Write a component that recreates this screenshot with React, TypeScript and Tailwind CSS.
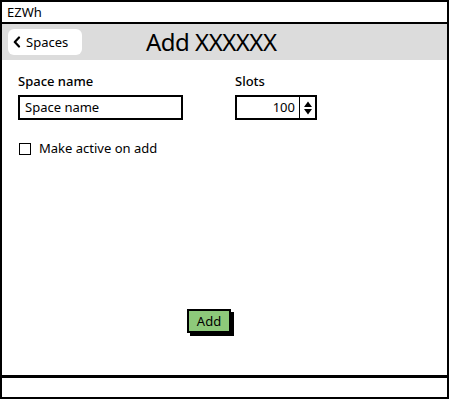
export default function App() {
  return (
    <div className="w-[450px] h-[400px] bg-white p-0 font-['Noto_Sans',sans-serif] text-black">
      <div className="flex h-[399px] w-[449px] flex-col border-2 border-black">
        {/* title bar */}
        <div className="flex h-[22px] items-center border-b-2 border-black px-[5px] text-[13px] leading-none">
          EZWh
        </div>

        {/* header */}
        <div className="flex h-[36px] items-center bg-[#dcdcdc] pl-[6px]">
          <button
            type="button"
            className="flex h-[26px] w-[74px] items-center gap-[5px] rounded-[6px] bg-white pl-[5px] text-[13px] leading-none"
          >
            <svg width="8" height="12" viewBox="0 0 8 12">
              <path d="M6 1.5 L1.8 6 L6 10.5" fill="none" stroke="#000" strokeWidth="2.2" strokeLinecap="round" strokeLinejoin="round" />
            </svg>
            Spaces
          </button>
          <h1 className="ml-[64px] text-[24px] leading-none tracking-[-0.5px]">Add XXXXXX</h1>
        </div>

        {/* form */}
        <div className="flex flex-1 flex-col px-[16px] pt-[15px]">
          <div className="flex gap-[52px]">
            <div className="flex flex-col">
              <label className="text-[13px] font-medium leading-none">Space name</label>
              <div className="mt-[7px] flex h-[25px] w-[165px] items-center border-2 border-black px-[5px] text-[13px] leading-none">
                Space name
              </div>
            </div>
            <div className="flex flex-col">
              <label className="text-[13px] font-medium leading-none">Slots</label>
              <div className="mt-[7px] flex h-[25px] w-[82px] items-stretch border-2 border-black">
                <div className="flex flex-1 items-center justify-end pr-[4px] text-[13px] leading-none">100</div>
                <div className="flex w-[16px] items-center justify-center border-l border-black">
                  <svg width="10" height="16" viewBox="0 0 10 16">
                    <path d="M5 1.5 L9 7 L1 7 Z" fill="#000" />
                    <path d="M1 9 L9 9 L5 14.5 Z" fill="#000" />
                  </svg>
                </div>
              </div>
            </div>
          </div>

          <div className="mt-[22px] flex items-center gap-[8px] pl-[1px]">
            <div className="h-[12px] w-[12px] border-[1.5px] border-black" />
            <span className="text-[13px] leading-none">Make active on add</span>
          </div>

          <div className="mt-[154px] flex">
            <button
              type="button"
              className="ml-[169px] h-[24px] w-[44px] border-2 border-black bg-[#8dc97a] text-[13px] leading-none shadow-[3px_3px_0_#000]"
            >
              Add
            </button>
          </div>
        </div>

        {/* footer */}
        <div className="h-[22px] border-t-[3px] border-black" />
      </div>
    </div>
  );
}
